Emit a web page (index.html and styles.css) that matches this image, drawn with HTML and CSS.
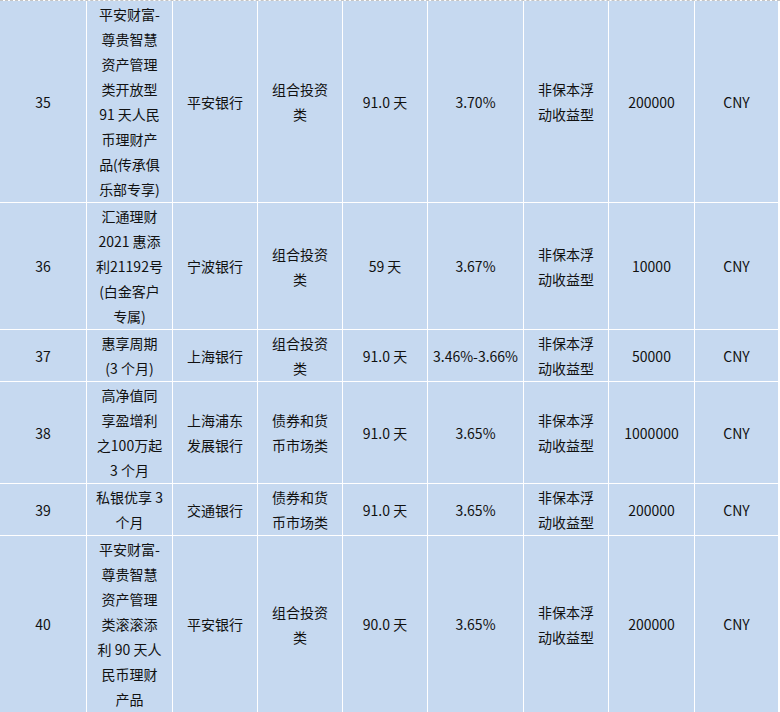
FILE: index.html
```html
<!DOCTYPE html>
<html lang="zh-CN">
<head>
<meta charset="utf-8">
<title>理财产品列表</title>
<link rel="stylesheet" href="styles.css">
</head>
<body>
<div class="sheet">
<table class="grid">
<colgroup>
<col class="c-no"><col class="c-name"><col class="c-bank"><col class="c-type"><col class="c-term"><col class="c-rate"><col class="c-kind"><col class="c-min"><col class="c-cur">
</colgroup>
<tbody>
<tr>
<td>35</td>
<td>平安财富-<br>尊贵智慧<br>资产管理<br>类开放型<br>91 天人民<br>币理财产<br>品(传承俱<br>乐部专享)</td>
<td>平安银行</td>
<td>组合投资<br>类</td>
<td>91.0 天</td>
<td>3.70%</td>
<td>非保本浮<br>动收益型</td>
<td>200000</td>
<td>CNY</td>
</tr>
<tr>
<td>36</td>
<td>汇通理财<br>2021 惠添<br>利21192号<br>(白金客户<br>专属)</td>
<td>宁波银行</td>
<td>组合投资<br>类</td>
<td>59 天</td>
<td>3.67%</td>
<td>非保本浮<br>动收益型</td>
<td>10000</td>
<td>CNY</td>
</tr>
<tr>
<td>37</td>
<td>惠享周期<br>(3 个月)</td>
<td>上海银行</td>
<td>组合投资<br>类</td>
<td>91.0 天</td>
<td>3.46%-3.66%</td>
<td>非保本浮<br>动收益型</td>
<td>50000</td>
<td>CNY</td>
</tr>
<tr>
<td>38</td>
<td>高净值同<br>享盈增利<br>之100万起<br>3 个月</td>
<td>上海浦东<br>发展银行</td>
<td>债券和货<br>币市场类</td>
<td>91.0 天</td>
<td>3.65%</td>
<td>非保本浮<br>动收益型</td>
<td>1000000</td>
<td>CNY</td>
</tr>
<tr>
<td>39</td>
<td>私银优享 3<br>个月</td>
<td>交通银行</td>
<td>债券和货<br>币市场类</td>
<td>91.0 天</td>
<td>3.65%</td>
<td>非保本浮<br>动收益型</td>
<td>200000</td>
<td>CNY</td>
</tr>
<tr>
<td>40</td>
<td>平安财富-<br>尊贵智慧<br>资产管理<br>类滚滚添<br>利 90 天人<br>民币理财<br>产品</td>
<td>平安银行</td>
<td>组合投资<br>类</td>
<td>90.0 天</td>
<td>3.65%</td>
<td>非保本浮<br>动收益型</td>
<td>200000</td>
<td>CNY</td>
</tr>
</tbody>
</table>
</div>
</body>
</html>
```
FILE: styles.css
```css
html, body {
  margin: 0;
  padding: 0;
  background: #ffffff;
}

.sheet {
  border-top: 1px dashed #c4c4c4;
  width: 780px;
}

.grid {
  table-layout: fixed;
  border-collapse: separate;
  border-spacing: 0;
  width: 779px;
  font-family: "Noto Sans CJK SC", "Noto Sans", sans-serif;
  font-size: 14px;
  color: #111111;
}

.c-no { width: 87px; }
.c-name { width: 86px; }
.c-bank { width: 85px; }
.c-type { width: 85px; }
.c-term { width: 85px; }
.c-rate { width: 96px; }
.c-kind { width: 85px; }
.c-min { width: 86px; }
.c-cur { width: 84px; }

.grid td {
  box-sizing: border-box;
  background: #c6d9f0;
  border-right: 1px solid #ffffff;
  border-bottom: 1px solid #ffffff;
  padding: 1px 0 0 0;
  line-height: 25px;
  text-align: center;
  vertical-align: middle;
  white-space: nowrap;
  overflow: hidden;
}
```
